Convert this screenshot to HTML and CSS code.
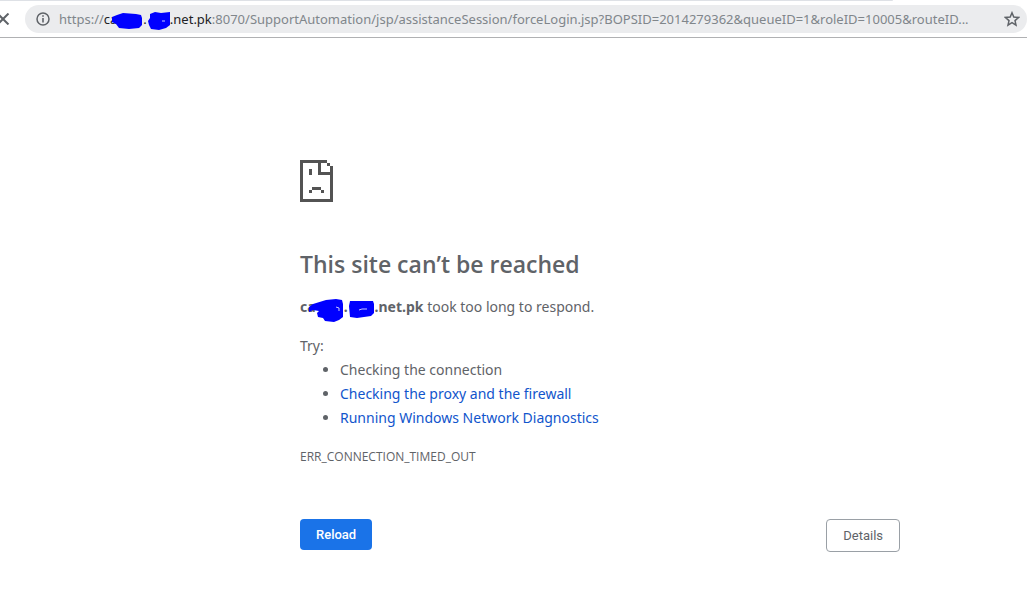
FILE: index.html
```html
<!DOCTYPE html>
<html lang="en">

<head>
    <meta charset="UTF-8">
    <meta name="viewport" content="width=device-width, initial-scale=1.0">
    <title>This site can’t be reached</title>
    <link rel="stylesheet" href="styles.css">
</head>

<body>
    <header class="toolbar">
        <div class="tab-strip"></div>
        <div class="toolbar-row">
            <button class="icon-button stop" type="button" aria-label="Stop loading">
                <svg width="10" height="12" viewBox="0 0 10 12">
                    <path d="M-2 1L8.500 11.500M8.500 .5L-2 11" fill="none" stroke="#5f6368" stroke-width="2" />
                </svg>
            </button>
            <div class="omnibox">
                <svg class="info" width="14" height="14" viewBox="0 0 14 14">
                    <circle cx="7" cy="7" r="6" fill="none" stroke="#5f6368" stroke-width="1.500" />
                    <path d="M7 6v4.500M7 3.200v1.600" stroke="#5f6368" stroke-width="1.600" />
                </svg>
                <div class="url">https://<span class="host">ca<svg class="mark mark-url-name" width="32" height="18" viewBox="0 0 32 18"><path d="M1 5L6 3L12 1L25 2L30 3L31 6L31 13L28 16L18 17L8 16L5 12L1 10Z" /></svg>.<svg class="mark mark-url-domain" width="24" height="20" viewBox="0 0 24 20"><path d="M3 3L8 1L14 2L23 1L23 14L19 17L12 19L4 18L2 14L1 10L3 7Z" /><path class="gap" d="M15 10h3" /></svg>.net.pk</span>:8070/SupportAutomation/jsp/assistanceSession/forceLogin.jsp?BOPSID=2014279362&amp;queueID=1&amp;roleID=10005&amp;routeID...</div>
                <button class="icon-button" type="button" aria-label="Bookmark this page">
                    <svg width="16" height="16" viewBox="0 0 16 16">
                        <path d="M8 1.800L9.800 6.100L14.500 6.500L11 9.600L12 14.100L8 11.700L4 14.100L5 9.600L1.500 6.500L6.200 6.100Z" fill="none" stroke="#5f6368" stroke-width="1.500" />
                    </svg>
                </button>
            </div>
        </div>
    </header>

    <main class="error-page">
        <svg class="sad-page" width="33" height="42" viewBox="0 0 11 14" shape-rendering="crispEdges">
            <path d="M0 0h9v1H7v3h4v1H6V1H1v12h9V2h1v12H0zM9 1h1v1H9zM3 3h1v2H3zM4 9h3v1H4zM3 10h1v1H3zM7 10h1v1H7z" />
        </svg>

        <h1>This site can’t be reached</h1>

        <p class="summary"><strong>ca<svg class="mark mark-name" width="36" height="24" viewBox="0 0 36 24"><path d="M1 9L5 6L18 2L28 1L34 2L35 6L35 19L31 22L26 24L17 23L15 20L10 19L9 15L11 13L5 12L1 14Z" /><path class="gap" d="M28 9l3 1v3" /></svg>.<svg class="mark mark-domain" width="27" height="20" viewBox="0 0 27 20"><path d="M2 3L25 3L26 6L26 15L23 18L9 20L2 19L1 8Z" /><path class="gap" d="M11 12l3-1h5" /></svg>.net.pk</strong> took too long to respond.</p>

        <p class="try">Try:</p>
        <ul class="suggestions">
            <li>Checking the connection</li>
            <li><a href="#">Checking the proxy and the firewall</a></li>
            <li><a href="#">Running Windows Network Diagnostics</a></li>
        </ul>

        <div class="error-code">ERR_CONNECTION_TIMED_OUT</div>

        <div class="buttons">
            <button class="button reload" type="button">Reload</button>
            <button class="button details" type="button">Details</button>
        </div>
    </main>
</body>

</html>
```

FILE: styles.css
```css
body {
    margin: 0;
    background-color: #fff;
    color: #5f6368;
    font-family: "Noto Sans", "Open Sans", sans-serif;
    font-size: 14px;
    line-height: 24px;
}

.toolbar {
    border-bottom: 1px solid #b0b1b3;
}

.tab-strip {
    width: 87%;
    height: 1px;
    background-color: #dee1e6;
    border-bottom-right-radius: 4px;
}

.toolbar-row {
    display: flex;
    align-items: center;
    gap: 15px;
    padding: 4px 0;
}

.icon-button {
    display: flex;
    flex: none;
    padding: 0;
    border: 0;
    background: none;
}

.omnibox {
    display: flex;
    flex: 1;
    align-items: center;
    min-width: 0;
    height: 28px;
    padding: 0 7px 0 11px;
    box-sizing: border-box;
    border-radius: 14px;
    background-color: #ebecee;
}

.info {
    flex: none;
    margin-right: 9px;
}

.url {
    flex: 1;
    min-width: 0;
    overflow: hidden;
    color: #80868b;
    font-size: 13px;
    line-height: 28px;
    white-space: nowrap;
}

.host {
    color: #202124;
}

/* marker strokes over the hidden parts of the host name */
.mark {
    fill: #00f;
    vertical-align: middle;
}

.mark .gap {
    fill: none;
    stroke: #c8c8ff;
}

.mark-url-name {
    margin-left: -6px;
}

.mark-url-domain {
    margin-right: -1px;
}

.mark-name {
    margin-bottom: -4px;
    margin-left: -8px;
}

.error-page {
    max-width: 600px;
    padding: 122px 0 0 300px;
}

.sad-page {
    display: block;
    fill: #535353;
}

h1 {
    margin: 45px 0 14px;
    font-family: "Open Sans", "Noto Sans", sans-serif;
    font-size: 23px;
    font-weight: 600;
    line-height: 34px;
}

p {
    margin: 0;
}

.summary {
    height: 24px;
    margin-bottom: 15px;
}

.suggestions {
    margin: 0;
    padding-left: 40px;
}

a {
    color: #1155cc;
    text-decoration: none;
}

.error-code {
    margin-top: 15px;
    font-family: "Open Sans", "Noto Sans", sans-serif;
    font-size: 12px;
}

.buttons {
    display: flex;
    align-items: flex-start;
    justify-content: space-between;
    margin-top: 50px;
}

.button {
    padding: 0 16px;
    border-radius: 4px;
    font-family: Roboto, sans-serif;
    font-size: 13px;
}

.reload {
    height: 31px;
    border: 0;
    background-color: #1a73e8;
    color: #fff;
    font-weight: 500;
}

.details {
    height: 33px;
    border: 1px solid #9aa0a6;
    background-color: #fff;
    color: #5f6368;
}
```
